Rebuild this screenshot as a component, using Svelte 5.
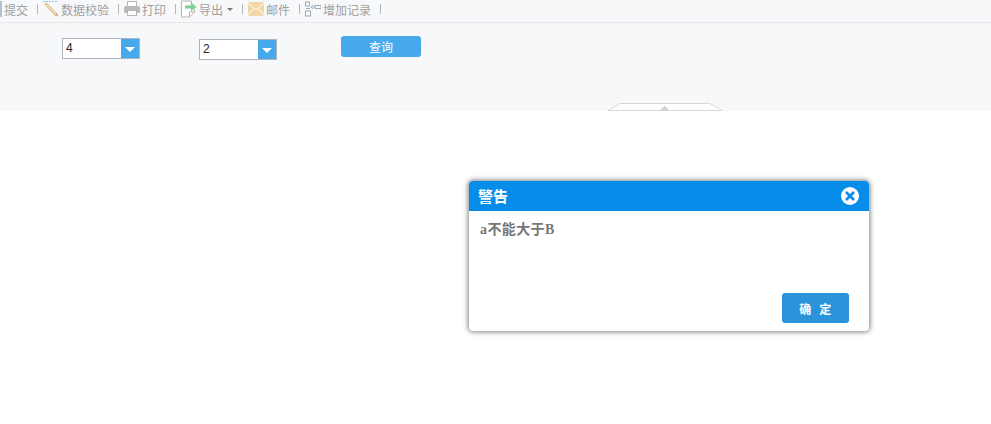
<script>
	const selects = ["4", "2"];
</script>

<div class="page">
	<header class="toolbar">
		<span class="grip"></span>
		<span class="item">提交</span>
		<i class="sep"></i>
		<svg class="ico" width="16" height="16" viewBox="0 1 16 16">
			<path d="M0 1.500h14" stroke="#8cc4ee" stroke-width="1" stroke-dasharray="2 1" />
			<path d="M1.500 4l2-1 10 10 1 3-3-1z" fill="#f3d9a0" stroke="#c9b27f" stroke-width=".7" />
			<path d="M12 15l3 1-1-3z" fill="#ee9c8c" />
		</svg>
		<span class="item">数据校验</span>
		<i class="sep"></i>
		<svg class="ico" width="16" height="16" viewBox="0 1 16 16">
			<rect x="3.500" y="1.500" width="9" height="5" fill="#fff" stroke="#b5b5b5" />
			<rect x="0" y="6" width="16" height="7" rx="1.500" fill="#b9b9b9" />
			<rect x="3.500" y="10.500" width="9" height="5" fill="#fff" stroke="#b5b5b5" />
		</svg>
		<span class="item">打印</span>
		<i class="sep"></i>
		<svg class="ico" width="16" height="18" viewBox="0 1.500 16 18">
			<path d="M.5 2.500h10v4M.5 2.500v16h8l5-5V11" fill="#fff" stroke="#b5b5b5" />
			<path d="M8.500 18.500v-5h5" fill="none" stroke="#b5b5b5" />
			<path d="M4 7h6V4l5.500 4.500L10 13v-3H4z" fill="#7ccf97" />
		</svg>
		<span class="item">导出</span>
		<span class="caret"></span>
		<i class="sep"></i>
		<svg class="ico" width="16" height="14" viewBox="0 0 16 14">
			<rect width="16" height="14" fill="#f2d6a8" />
			<path d="M0 1l8 7 8-7M0 13l6-7M16 13l-6-7" fill="none" stroke="#fbf0dd" stroke-width="1.200" />
		</svg>
		<span class="item">邮件</span>
		<i class="sep"></i>
		<svg class="ico" width="16" height="16" viewBox="0 0 16 16">
			<rect x="0.500" y="1" width="4" height="4" fill="none" stroke="#a8a8a8" />
			<rect x="0.500" y="10" width="5" height="5" fill="none" stroke="#a8a8a8" />
			<path d="M1 7.500h4" stroke="#a8a8a8" />
			<rect x="10" y="4.500" width="6" height="3" fill="none" stroke="#a8a8a8" />
			<path d="M6 6h4M8 4L6 6l2 2" fill="none" stroke="#8cb8e8" />
		</svg>
		<span class="item">增加记录</span>
		<i class="sep"></i>
	</header>

	<section class="filters">
		{#each selects as value}
			<div class="select">
				<span class="value">{value}</span>
				<span class="arrow"></span>
			</div>
		{/each}
		<button class="query">查询</button>
	</section>

	<div class="handle">
		<svg width="116" height="8" viewBox="0 0 116 8">
			<path d="M1 7.500L13 .5h90l12 7z" fill="#fff" stroke="#d8d8d8" />
			<path d="M53 7l4.500-4L62 7z" fill="#cfcfcf" />
		</svg>
	</div>

	<div class="dialog">
		<div class="title">
			<span>警告</span>
			<svg width="18" height="18" viewBox="0 0 18 18">
				<circle cx="9" cy="9" r="9" fill="#fff" />
				<path d="M5 5l8 8M13 5l-8 8" stroke="#068de9" stroke-width="2.600" />
			</svg>
		</div>
		<div class="message">a不能大于B</div>
		<div class="actions">
			<button class="ok">确&nbsp;&nbsp;定</button>
		</div>
	</div>
</div>

<style>
	:global(body) {
		background: #fff;
	}

	.page {
		position: relative;
		height: 424px;
		overflow: hidden;
		font-family: "Liberation Sans", "Noto Sans CJK SC", sans-serif;
		font-size: 12px;
	}

	.toolbar {
		display: flex;
		align-items: center;
		height: 18px;
		padding-bottom: 4px;
		background: #f7f8fa;
		border-bottom: 1px solid #e4e6e9;
		color: #a0a0a0;
	}
	.grip {
		width: 2px;
		height: 16px;
		background: #b9bdd0;
		margin-right: 2px;
	}
	.item {
		white-space: nowrap;
	}
	.sep {
		width: 1px;
		height: 10px;
		background: #b5b5b5;
		margin: 0 5px 0 9px;
	}
	.ico {
		flex: none;
		margin-right: 2px;
	}
	.caret {
		width: 0;
		height: 0;
		margin-left: 4px;
		border: 3px solid transparent;
		border-top: 3px solid #777;
		border-bottom: 0;
	}

	.filters {
		display: flex;
		align-items: flex-start;
		height: 88px;
		padding: 13px 0 0 62px;
		box-sizing: border-box;
		background: #f7f8fa;
	}
	.select {
		display: flex;
		width: 78px;
		height: 21px;
		margin-top: 2px;
		margin-right: 59px;
		box-sizing: border-box;
		border: 1px solid #b2b4bd;
		background: #fff;
	}
	.select:nth-child(2) {
		margin-top: 3px;
	}
	.value {
		flex: 1;
		padding-left: 3px;
		line-height: 19px;
		color: #222;
	}
	.arrow {
		position: relative;
		width: 18px;
		background: #46a9ec;
	}
	.arrow::after {
		content: "";
		position: absolute;
		left: 4px;
		top: 8px;
		border: 5px solid transparent;
		border-top: 5px solid #fff;
		border-bottom: 0;
	}
	.query {
		width: 80px;
		height: 21px;
		margin-left: 5px;
		padding: 0;
		border: 0;
		border-radius: 3px;
		background: #46a9ec;
		color: #fff;
		font: inherit;
	}

	.handle {
		position: absolute;
		left: 607px;
		top: 103px;
		line-height: 0;
	}

	.dialog {
		position: absolute;
		left: 469px;
		top: 181px;
		width: 400px;
		height: 150px;
		display: flex;
		flex-direction: column;
		border-radius: 4px;
		background: #fff;
		box-shadow: 0 0 5px 1px rgba(0, 0, 0, 0.5);
	}
	.title {
		display: flex;
		align-items: center;
		justify-content: space-between;
		height: 30px;
		padding: 0 10px 0 9px;
		border-radius: 4px 4px 0 0;
		background: #068de9;
		color: #fff;
		font-size: 15px;
		font-weight: 700;
		font-family: "Liberation Serif", "Noto Sans CJK SC", serif;
	}
	.title span {
		margin-bottom: 2px;
	}
	.message {
		flex: 1;
		padding: 7px 11px;
		color: #777;
		font-family: "Liberation Serif", "Noto Sans CJK SC", serif;
		font-size: 14px;
		font-weight: 700;
		letter-spacing: 0.4px;
	}
	.actions {
		display: flex;
		justify-content: flex-end;
		padding: 0 20px 8px 0;
	}
	.ok {
		width: 67px;
		height: 30px;
		padding: 0;
		border: 0;
		border-radius: 3px;
		background: #2b93da;
		color: #fff;
		font: inherit;
		font-size: 12px;
		font-weight: 700;
		letter-spacing: 0.5px;
	}
</style>
